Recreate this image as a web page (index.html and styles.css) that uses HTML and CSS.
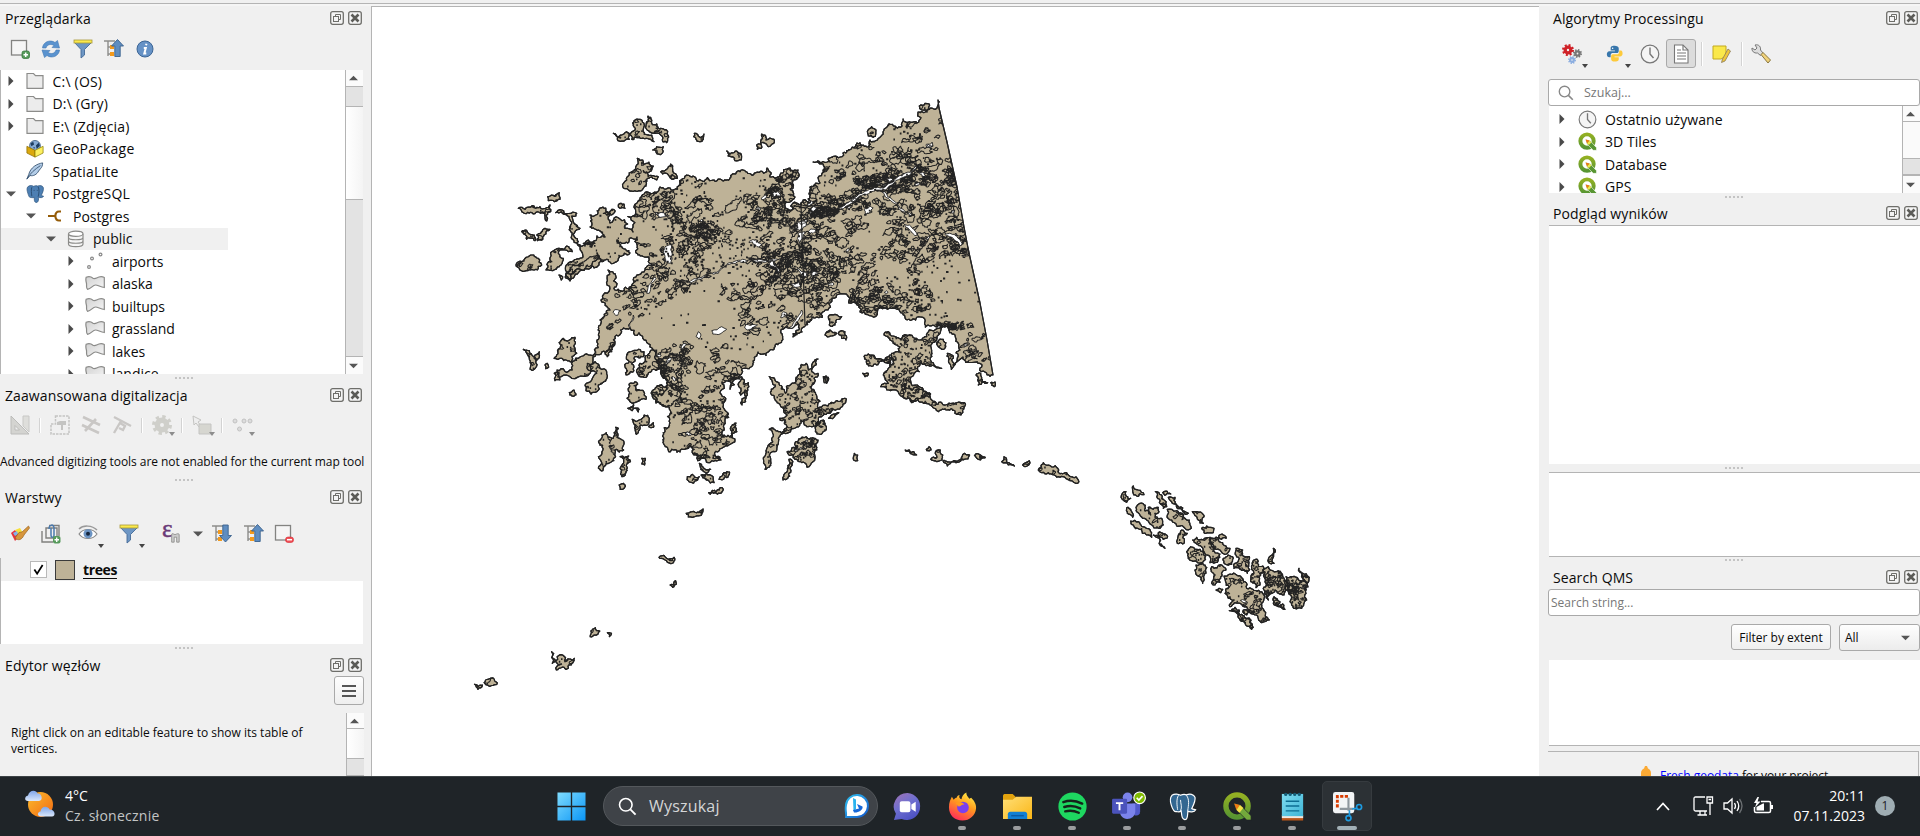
FILE: index.html
```html
<!DOCTYPE html>
<html lang="pl">
<head>
<meta charset="utf-8">
<title>QGIS</title>
<link rel="stylesheet" href="styles.css">
</head>
<body>
<svg class="defs" width="0" height="0">
  <defs>
    <linearGradient id="gPoly" x1="0" y1="0" x2="1" y2="1"><stop offset="0" stop-color="#d2d2d2"/><stop offset="1" stop-color="#f6f6f6"/></linearGradient>
    <linearGradient id="gWin" x1="0" y1="0" x2="1" y2="1"><stop offset="0" stop-color="#7fdcff"/><stop offset="1" stop-color="#0a95f5"/></linearGradient>
    <linearGradient id="gSun" x1="0" y1="0" x2="1" y2="1"><stop offset="0" stop-color="#fbbc2e"/><stop offset="1" stop-color="#f26a12"/></linearGradient>
    <linearGradient id="gCloud" x1="0" y1="0" x2="0" y2="1"><stop offset="0" stop-color="#7fa5e8"/><stop offset="1" stop-color="#dbe8fb"/></linearGradient>
    <linearGradient id="gChat" x1="0" y1="0" x2=".6" y2="1"><stop offset="0" stop-color="#a173b4"/><stop offset=".5" stop-color="#6f6fd0"/><stop offset="1" stop-color="#4d52c4"/></linearGradient>
    <linearGradient id="gFox" x1=".8" y1="0" x2=".3" y2="1"><stop offset="0" stop-color="#fff24a"/><stop offset=".45" stop-color="#ff9a1e"/><stop offset="1" stop-color="#ff2c5a"/></linearGradient>
    <linearGradient id="gFold" x1="0" y1="0" x2="1" y2="1"><stop offset="0" stop-color="#ffdf77"/><stop offset="1" stop-color="#fbb616"/></linearGradient>
    <linearGradient id="gQ" x1="0" y1="0" x2="0" y2="1"><stop offset="0" stop-color="#93b023"/><stop offset="1" stop-color="#589632"/></linearGradient>
    <linearGradient id="gNote" x1="0" y1="0" x2="1" y2="1"><stop offset="0" stop-color="#7fdcf0"/><stop offset="1" stop-color="#3fb5d6"/></linearGradient>
    <linearGradient id="gBing" x1="0" y1="0" x2="1" y2="1"><stop offset="0" stop-color="#2fc4f2"/><stop offset="1" stop-color="#1354c8"/></linearGradient>
    <symbol id="float" viewBox="0 0 14 14"><rect x=".7" y=".7" width="12.6" height="12.6" rx="2" fill="#f4f4f4" stroke="#6e6e6a" stroke-width="1.3"/><rect x="3.5" y="5.5" width="5" height="5" fill="none" stroke="#6e6e6a"/><path d="M5.5 5V3.5H10.5V8.5H9" fill="none" stroke="#6e6e6a"/></symbol>
    <symbol id="close" viewBox="0 0 14 14"><rect x=".7" y=".7" width="12.6" height="12.6" rx="2" fill="#f4f4f4" stroke="#6e6e6a" stroke-width="1.3"/><path d="M3.500 3.500L10.500 10.500M10.500 3.500L3.500 10.500" stroke="#5c5c58" stroke-width="2.600"/></symbol>
    <symbol id="right" viewBox="0 0 6 10"><path d="M.5 0L5.5 5L.5 10Z" fill="#4a4a4a"/></symbol>
    <symbol id="down" viewBox="0 0 10 6"><path d="M0 .5H10L5 5.5Z" fill="#555"/></symbol>
    <symbol id="up" viewBox="0 0 10 6"><path d="M0 5.5H10L5 .5Z" fill="#555"/></symbol>
    <symbol id="folder" viewBox="0 0 18 18"><path d="M1 1.5H7.5L9.5 3.7H17V16.3H1Z" fill="#ececec" stroke="#8c8c8a" stroke-width="1.2"/></symbol>
    <symbol id="poly" viewBox="0 0 20 16"><path d="M1.200 1.200C3.500 .3 6 .5 8 2.200C9.500 3.400 12 1.600 14 1C16 .5 18 .8 19.300 1.500V11.500C15.500 11.200 13 9 10.500 9C7.500 9 6.500 12.800 2.500 13.300C.8 12 2 9.500 1.400 7C.8 5 .6 3 1.200 1.200Z" fill="url(#gPoly)" stroke="#8b8b89" stroke-width="1.200"/></symbol>
    <symbol id="points" viewBox="0 0 20 18"><g fill="#fff" stroke="#888" stroke-width="1.2"><circle cx="4" cy="15" r="1.400"/><circle cx="7" cy="6.500" r="1.400"/><circle cx="15.500" cy="2.500" r="1.400"/></g></symbol>
    <symbol id="dbase" viewBox="0 0 18 18"><path d="M1.500 4V14C1.500 17.500 16 17.500 16 14V4M1.500 7.500C1.500 10.500 16 10.500 16 7.500M1.500 11C1.500 14 16 14 16 11" fill="#f5f5f5" stroke="#8a8a88" stroke-width="1.200"/><ellipse cx="8.750" cy="3.800" rx="7.250" ry="2.600" fill="#fff" stroke="#8a8a88" stroke-width="1.200"/></symbol>
    <symbol id="conn" viewBox="0 0 14 12"><path d="M0 6H7M13 1.500H11C8.500 1.500 7.500 3.500 7.300 6C7.500 8.500 8.500 10.500 11 10.500H13" fill="none" stroke="#955c08" stroke-width="2.200"/></symbol>
    <symbol id="gpkg" viewBox="0 0 20 20"><circle cx="10" cy="6.500" r="6" fill="#87abd4" stroke="#294a70" stroke-width=".8"/><path d="M5 4L8 2L9 5L6 7ZM11 6L14 3L15.500 6L12 10ZM8 8L10 8L9 10Z" fill="#1d3c60"/><path d="M1 7L10 11.500V19L1 14.500Z" fill="#dba80d" stroke="#8a6b00" stroke-width=".8"/><path d="M19 7L10 11.500V19L19 14.500Z" fill="#fdf060" stroke="#8a7b00" stroke-width=".8"/></symbol>
    <symbol id="feather" viewBox="0 0 20 20"><path d="M18.500 1C12 2 5 6 3 14L1 19L4.500 15C8 16 12 14 14 10L16 7.500C17.500 6 18.500 4 18.500 1Z" fill="#b3cde8" stroke="#3a5674" stroke-width="1"/><path d="M1 19C4 13 10 8 16 4" stroke="#3a5674" fill="none"/></symbol>
    <symbol id="elephant" viewBox="0 0 20 20"><path d="M2 2C4 0 7 .5 8.500 1.500C10.500 .5 12 .7 13 1.200C15.500 0 18.500 .6 19.300 3C19.800 6 18 9.500 17 11.500C18 12.500 19 12 19.500 12.500C18.500 14.500 15.500 14.300 14 13.500C14 16 14 18 12.500 19.200C11 20 9.500 19 9.300 17L9 13.500C7.500 14.500 6 14 5.500 13.800C4 14.500 3 12.500 2 9C1 6 .7 3.500 2 2Z" fill="#4d7fb3" stroke="#31567f" stroke-width=".8"/><path d="M6.500 2.500C5.500 5 6 9 6.500 12.500M13.500 2C15 5 14.500 9 13.500 13M8.500 6H9.500M12 6H13" stroke="#27496e" fill="none"/></symbol>
    <symbol id="qlogo" viewBox="0 0 20 20"><circle cx="9.500" cy="9.500" r="7" fill="#fff" stroke="url(#gQ)" stroke-width="4.200"/><path d="M8 8L12.500 9L19.500 16.500V19.300H16L9.500 12.500Z" fill="#589632" stroke="#fff" stroke-width=".6"/><path d="M8 8L12.200 9L9.500 12Z" fill="#ee7913"/><path d="M12.200 9L14 11L11.500 13.800L9.500 12Z" fill="#f0e64a"/></symbol>
    <symbol id="clock" viewBox="0 0 20 20"><circle cx="10" cy="10" r="8.800" fill="#f5f5f5" stroke="#777" stroke-width="1.200"/><path d="M10 3.500V10L13.500 14" fill="none" stroke="#777" stroke-width="1.400"/></symbol>
    <symbol id="funnel" viewBox="0 0 20 20"><path d="M1.500 3.500L8 10.500V19L11.500 16V10.500L18.500 3.500Z" fill="#6d96c4" stroke="#446a97" stroke-width=".9"/><rect x="1" y="1" width="18" height="3" fill="#fbe94c" stroke="#a8983a" stroke-width=".8"/></symbol>
    <symbol id="treeup" viewBox="0 0 20 20"><path d="M0 2H11M4 2V17M4 8H7M4 15H7" stroke="#8d8d8b" stroke-width="1.400" fill="none"/><rect x="6" y="6" width="4" height="4" fill="#f39a1d"/><rect x="6" y="13" width="4" height="4" fill="#f39a1d"/><path d="M13.500 .5L19.500 7H16.200V17.500H10.800V7H7.500Z" fill="#5f8dc0" stroke="#3a618c" stroke-width=".9"/></symbol>
    <symbol id="treedown" viewBox="0 0 20 20"><path d="M0 2H11M4 2V17M4 8H7M4 15H7" stroke="#8d8d8b" stroke-width="1.400" fill="none"/><rect x="6" y="6" width="4" height="4" fill="#f39a1d"/><rect x="6" y="13" width="4" height="4" fill="#f39a1d"/><path d="M13.500 18L19.500 11.500H16.200V1H10.800V11.500H7.500Z" fill="#5f8dc0" stroke="#3a618c" stroke-width=".9"/></symbol>
    <symbol id="gear" viewBox="0 0 20 20"><circle cx="10" cy="10" r="8" fill="none" stroke="currentColor" stroke-width="4" stroke-dasharray="3.200 3.080"/><circle cx="10" cy="10" r="4.700" fill="none" stroke="currentColor" stroke-width="5.400"/></symbol>
    <symbol id="glass" viewBox="0 0 20 20"><circle cx="8.200" cy="8.200" r="6.600" fill="none" stroke="currentColor" stroke-width="1.700"/><path d="M13 13L18.500 18.500" stroke="currentColor" stroke-width="2"/></symbol>
  </defs>
</svg>

<div class="desktop">
  <div class="topline"></div>
  <div class="workspace">
    <aside class="dock left">
      <header class="title"><span>Przeglądarka</span><svg><use href="#float"/></svg><svg><use href="#close"/></svg></header>
      <div class="tools browse">
        <svg viewBox="0 0 20 20"><rect x="1.500" y="1.500" width="15" height="14.500" fill="#f5f5f5" stroke="#838381" stroke-width="1.300"/><rect x="12" y="12" width="7.500" height="7.500" rx="2" fill="#579a5c" stroke="#2f7234" stroke-width=".7"/><path d="M15.700 13.500V18M13.500 15.700H18" stroke="#fff" stroke-width="1.500"/></svg>
        <svg viewBox="0 0 20 20"><path d="M1.500 9C2 3 9 0 14 3.500L16.500 1.500L18.500 9L11 8.500L13 6.500C9.500 4.500 6 5.500 5 9Z" fill="#5a93cf" stroke="#4379b4" stroke-width=".6"/><path d="M18.500 11C18 17 11 20 6 16.500L3.500 18.500L1 11L9 11.500L7 13.500C10.500 15.500 14 14.500 15 11Z" fill="#5a93cf" stroke="#4379b4" stroke-width=".6"/></svg>
        <svg><use href="#funnel"/></svg>
        <svg><use href="#treeup"/></svg>
        <svg viewBox="0 0 20 20"><circle cx="10" cy="10" r="8" fill="#6692c6" stroke="#3c6595" stroke-width="1"/><path d="M11.500 4.800L11 6.300M8.800 9H10.800L9.300 14.500H11.300" stroke="#fff" stroke-width="2" fill="none"/></svg>
      </div>
      <div class="pane tree">
        <div class="rows">
          <div class="row l0"><svg class="r"><use href="#right"/></svg><svg class="i"><use href="#folder"/></svg><span>C:\ (OS)</span></div>
          <div class="row l0"><svg class="r"><use href="#right"/></svg><svg class="i"><use href="#folder"/></svg><span>D:\ (Gry)</span></div>
          <div class="row l0"><svg class="r"><use href="#right"/></svg><svg class="i"><use href="#folder"/></svg><span>E:\ (Zdjęcia)</span></div>
          <div class="row l0"><svg class="r"></svg><svg class="i"><use href="#gpkg"/></svg><span>GeoPackage</span></div>
          <div class="row l0"><svg class="r"></svg><svg class="i"><use href="#feather"/></svg><span>SpatiaLite</span></div>
          <div class="row l0"><svg class="d"><use href="#down"/></svg><svg class="i"><use href="#elephant"/></svg><span>PostgreSQL</span></div>
          <div class="row l1"><svg class="d"><use href="#down"/></svg><svg class="i thin"><use href="#conn"/></svg><span>Postgres</span></div>
          <div class="row l2"><svg class="d"><use href="#down"/></svg><svg class="i small"><use href="#dbase"/></svg><span>public</span></div>
          <div class="row l3"><svg class="r"><use href="#right"/></svg><svg class="i"><use href="#points"/></svg><span>airports</span></div>
          <div class="row l3"><svg class="r"><use href="#right"/></svg><svg class="i"><use href="#poly"/></svg><span>alaska</span></div>
          <div class="row l3"><svg class="r"><use href="#right"/></svg><svg class="i"><use href="#poly"/></svg><span>builtups</span></div>
          <div class="row l3"><svg class="r"><use href="#right"/></svg><svg class="i"><use href="#poly"/></svg><span>grassland</span></div>
          <div class="row l3"><svg class="r"><use href="#right"/></svg><svg class="i"><use href="#poly"/></svg><span>lakes</span></div>
          <div class="row l3"><svg class="r"><use href="#right"/></svg><svg class="i"><use href="#poly"/></svg><span>landice</span></div>
        </div>
        <div class="bar"><div class="btn"><svg><use href="#up"/></svg></div><div class="stub"></div><div class="thumb"></div><div class="trough"></div><div class="btn end"><svg><use href="#down"/></svg></div></div>
      </div>
      <div class="split"></div>
      <header class="title"><span class="t2">Zaawansowana digitalizacja</span><svg><use href="#float"/></svg><svg><use href="#close"/></svg></header>
      <div class="tools digit">
        <svg viewBox="0 0 20 20"><path d="M1 1L19 19H1ZM5 10.500V15H9.500Z" fill="#d4d4d1" stroke="#bcbcba" fill-rule="evenodd"/><path d="M13 1H19V17L13 11Z" fill="#dededb" stroke="#c8c8c6"/></svg>
        <i></i>
        <svg viewBox="0 0 20 20"><path d="M5.500 1H19V19H1V9H5.500Z" fill="none" stroke="#c4c4c2" stroke-width="1.500" stroke-dasharray="2.500 1"/><path d="M7 7L10 6H16V10H13V15H11V10H7Z" fill="#c4c4c2"/></svg>
        <svg class="m2" viewBox="0 0 20 20"><path d="M2 2L19 10M1 10L18 18M15 4L4 16" stroke="#c9c7c5" stroke-width="2.600"/></svg>
        <svg class="m3" viewBox="0 0 20 20"><path d="M2 2L19 11M9 6L2 18M8 8L13 11L11 15L7 13" fill="none" stroke="#c9c7c5" stroke-width="2.400"/></svg>
        <i></i>
        <span class="drop"><svg class="pale"><use href="#gear"/></svg><b></b></span>
        <i></i>
        <span class="drop"><svg viewBox="0 0 20 20"><path d="M1 1L9 5L6 7L9 11L7 12L4 8L2 10Z" fill="#eee" stroke="#c4c4c2"/><path d="M7 9H19V19H7Z" fill="#d6d6d0" stroke="#c4c4c2"/></svg><b></b></span>
        <i></i>
        <span class="drop"><svg viewBox="0 0 20 20"><g fill="#dcdcdc" stroke="#c2c2c2"><circle cx="3" cy="6" r="2"/><circle cx="12" cy="6" r="2"/><circle cx="18" cy="6" r="2"/><circle cx="7.500" cy="14" r="2"/></g></svg><b></b></span>
      </div>
      <p class="message">Advanced digitizing tools are not enabled for the current map tool</p>
      <div class="split"></div>
      <header class="title"><span>Warstwy</span><svg><use href="#float"/></svg><svg><use href="#close"/></svg></header>
      <div class="tools layers">
        <svg viewBox="0 0 20 20"><path d="M1 9L5 6L10 12L5 17Z" fill="#e8323c"/><path d="M5 6L10 4L13 9L9 12Z" fill="#f7e13a"/><path d="M3 9L7 7L8 10L5 12Z" fill="#83b2ea"/><path d="M18.500 2L12 8L9 8.500L5 14C8 17 12 16 14 11L19.500 4Z" fill="#d7963c" stroke="#9b6422" stroke-width=".7"/></svg>
        <svg viewBox="0 0 20 20"><path d="M1 7V18H12M5 4V14H16V4ZM8 1.500H18V12" fill="none" stroke="#80807e" stroke-width="1.400"/><path d="M8 5C8 0 13 0 13 4V11C13 14 10 14 10 11V4" fill="none" stroke="#4a79ad" stroke-width="1.500"/><rect x="12" y="12" width="7.500" height="7.500" rx="2" fill="#579a5c"/><path d="M15.700 13.500V18M13.500 15.700H18" stroke="#fff" stroke-width="1.400"/></svg>
        <span class="drop eye"><svg viewBox="0 0 20 20"><path d="M1 5C5 1 14 1 19 6" fill="none" stroke="#999" stroke-width="1.500"/><path d="M1 10C5 4 15 4 19 10C15 16 5 16 1 10Z" fill="#fff" stroke="#888" stroke-width="1.100"/><circle cx="10" cy="9.800" r="4.500" fill="#6b93c2"/><circle cx="10" cy="9.800" r="2" fill="#16263c"/></svg><b></b></span>
        <span class="drop fil"><svg><use href="#funnel"/></svg><b></b></span>
        <span class="eps"><em>ε</em><svg viewBox="0 0 12 12"><path d="M2 11V2C2 0 4 1 6 2C8 1 11 0 11 2V11H8V5H5V11Z" fill="#ccc" stroke="#8a8a88"/></svg></span>
        <svg class="caret"><use href="#down"/></svg>
        <svg class="td"><use href="#treedown"/></svg>
        <svg class="tu"><use href="#treeup"/></svg>
        <svg viewBox="0 0 20 20"><rect x="1.500" y="1.500" width="15" height="14.500" fill="#f5f5f5" stroke="#838381" stroke-width="1.300"/><rect x="11.500" y="13" width="8" height="5.500" rx="2.500" fill="#f04e55" stroke="#d32e35" stroke-width=".6"/><path d="M13 15.700H18" stroke="#fff" stroke-width="1.500"/></svg>
      </div>
      <div class="pane layerlist"><div class="layer"><span class="check"><svg viewBox="0 0 12 12"><path d="M1.500 6L4.500 10.500L10.500 1" fill="none" stroke="#000" stroke-width="1.900"/></svg></span><span class="swatch"></span><strong>trees</strong></div></div>
      <div class="split"></div>
      <header class="title vertex"><span>Edytor węzłów</span><svg><use href="#float"/></svg><svg><use href="#close"/></svg></header>
      <div class="menurow"><button class="menu"><s></s><s></s><s></s></button></div>
      <div class="vertexbody"><p>Right click on an editable feature to show its table of<br>vertices.</p><div class="bar"><div class="btn"><svg><use href="#up"/></svg></div><div class="thumb"></div><div class="stub"></div></div></div>
    </aside>

    <main class="map"><svg id="map" viewBox="373 7 1166 769" width="1166" height="769"></svg></main>

    <aside class="dock right">
      <header class="title"><span>Algorytmy Processingu</span><svg><use href="#float"/></svg><svg><use href="#close"/></svg></header>
      <div class="tools proc">
        <span class="drop g"><svg class="red"><use href="#gear"/></svg><svg class="gray"><use href="#gear"/></svg><svg class="blue"><use href="#gear"/></svg><b></b></span>
        <span class="drop py"><svg viewBox="0 0 20 20"><path d="M10 1C6 1 5.500 2.500 5.500 4V6.500H10.500V7.300H4C2 7.300 1 9 1 11C1 13.500 2 14.500 4 14.500H5.500V12C5.500 10 7 9.500 8 9.500H13C14 9.500 15 8.500 15 7V4C15 2 13 1 10 1Z" fill="#3776ab"/><path d="M10.500 19.500C14.500 19.500 15 18 15 16.500V14.500H10V13.500H16.500C18.500 13.500 19.500 12 19.500 10C19.500 7 18.500 6.500 16.500 6.500H15.500V8.500C15.500 10 14 11 13 11H8C7 11 6 12 6 13.500V16.500C6 18.500 7.500 19.500 10.500 19.500Z" fill="#fdca3b"/><circle cx="7.800" cy="3.800" r=".9" fill="#fff"/></svg><b></b></span>
        <svg class="ck"><use href="#clock"/></svg>
        <span class="pressed"><svg viewBox="0 0 20 20"><path d="M3.500 1H12L17 6V19H3.500Z" fill="#fff" stroke="#777" stroke-width="1.100"/><path d="M12 1V6H17M6 6H10M6 9H15M6 12H15M6 15H15" fill="none" stroke="#777" stroke-width="1.200"/></svg></span>
        <i></i>
        <svg class="nt" viewBox="0 0 20 20"><path d="M2 2H15V12L10 15H2Z" fill="#fae84a" stroke="#c2a91f"/><path d="M17 5L19.500 7L14 17L10.500 18.500L11.500 15Z" fill="#f0c63a" stroke="#8a7b5a" stroke-width=".8"/></svg>
        <i></i>
        <svg class="wr" viewBox="0 0 20 20"><path d="M1 4L4 6L6 4L4 1C8 0 10 3 9.500 6L12 9L9.500 11.500L6.500 9C3 9.500 .5 7 1 4Z" fill="#ddd" stroke="#777"/><path d="M10 10.500L12 8.500L19.500 16L17 19Z" fill="#f0d27a" stroke="#8a7740"/></svg>
      </div>
      <div class="search"><svg><use href="#glass"/></svg><span>Szukaj...</span></div>
      <div class="pane algs">
        <div class="rows">
          <div class="row"><svg class="r"><use href="#right"/></svg><svg class="i"><use href="#clock"/></svg><span>Ostatnio używane</span></div>
          <div class="row"><svg class="r"><use href="#right"/></svg><svg class="i"><use href="#qlogo"/></svg><span>3D Tiles</span></div>
          <div class="row"><svg class="r"><use href="#right"/></svg><svg class="i"><use href="#qlogo"/></svg><span>Database</span></div>
          <div class="row"><svg class="r"><use href="#right"/></svg><svg class="i"><use href="#qlogo"/></svg><span>GPS</span></div>
        </div>
        <div class="bar"><div class="btn"><svg><use href="#up"/></svg></div><div class="trough lite"></div><div class="stub"></div><div class="btn end"><svg><use href="#down"/></svg></div></div>
      </div>
      <div class="split"></div>
      <header class="title res"><span>Podgląd wyników</span><svg><use href="#float"/></svg><svg><use href="#close"/></svg></header>
      <div class="blank b1"></div>
      <div class="split tight"></div>
      <div class="blank b2"></div>
      <div class="split low"></div>
      <header class="title qms"><span>Search QMS</span><svg><use href="#float"/></svg><svg><use href="#close"/></svg></header>
      <div class="search plain"><span>Search string...</span></div>
      <div class="filters"><button class="pushbtn">Filter by extent</button><button class="combo"><span>All</span><svg><use href="#down"/></svg></button></div>
      <div class="blank b3"></div>
      <div class="promo"><svg viewBox="0 0 10 20"><path d="M4 0H6L7 2.500C9 3.500 10 5 10 7V20H0V7C0 5 1 3.500 3 2.500Z" fill="#fbaa35"/></svg><span><a>Fresh geodata</a> for your project</span></div>
    </aside>
  </div>

  <footer class="taskbar">
    <div class="weather"><svg viewBox="0 0 30 28"><circle cx="15.500" cy="14.500" r="12.500" fill="url(#gSun)"/><path d="M3 11C-1 11 -.5 6 3 5.500C4 0 11 -1 12.500 3.500C17 3 18.500 10.500 14 11Z" fill="url(#gCloud)"/><path d="M16 26.500C12 26.500 12 22 15.500 21.500C16 15.500 23 15.500 24.500 19.500C30.500 19.500 31 26.500 27 26.500Z" fill="url(#gCloud)"/></svg><div><span>4°C</span><small>Cz. słonecznie</small></div></div>
    <div class="apps">
      <div class="app start"><svg viewBox="0 0 30 30"><path d="M.5 .5H14.300V14.300H.5ZM15.700 .5H29.500V14.300H15.700ZM.5 15.700H14.300V29.500H.5ZM15.700 15.700H29.500V29.500H15.700Z" fill="url(#gWin)"/></svg></div>
      <div class="pill"><svg><use href="#glass"/></svg><span>Wyszukaj</span><svg class="bing" viewBox="0 0 26 26"><path d="M1 25C2 22 0 18 1 12A12 12 0 1 1 13 25Z" fill="url(#gBing)"/><path d="M3 23C3.500 19 2 17 3 12A10 10 0 1 1 13 23Z" fill="#fff"/><path d="M9 5L12 6.500V16L9.500 18Z" fill="#2bb4ee"/><path d="M13 11L18.500 13.500C19.500 17 14 20 10 19.500L9 17L15 15.500Z" fill="#1768d8"/></svg></div>
      <div class="app"><svg viewBox="0 0 30 30"><path d="M15 1A14 14 0 1 1 9 28L1 29L3 22.500A14 14 0 0 1 15 1Z" fill="url(#gChat)"/><rect x="7" y="9.500" width="11" height="11.500" rx="2" fill="#fff"/><path d="M19 13L23.500 10V20.500L19 17.500Z" fill="#fff"/></svg></div>
      <div class="app run"><svg viewBox="0 0 30 30"><path d="M4 5L6 8C7 6.500 8 6 9 6C9 4 11 3 12 3C11 5 12 7 14 7.500C14 5 16 2 19 .5C19 4 21 5 22 7L24 6C27 9 29.500 13 29 17C28.500 24 22.500 29.500 15 29.500C7 29.500 1 24 1 16C1 11 2.500 8 4 5Z" fill="url(#gFox)"/><circle cx="15.500" cy="16" r="6" fill="#7a3ff0"/><path d="M8 12C10 9.500 15 10 17 13C14 12.500 13.500 15 11 15Z" fill="#ff9a1e"/></svg></div>
      <div class="app run"><svg viewBox="0 0 30 30"><path d="M0 4C0 2.500 1 2 2 2H10L13 5V10H0Z" fill="#e2a30e"/><path d="M0 8H10L13.500 5H30V28H0Z" fill="url(#gFold)"/><path d="M5 28V23C5 21.500 6 20.500 7.500 20.500H22.500C24 20.500 25 21.500 25 23V28Z" fill="#117fd4"/><path d="M8.500 24.500H21.500" stroke="#0b5aa5" stroke-width="1.500"/></svg></div>
      <div class="app run"><svg viewBox="0 0 30 30"><circle cx="15" cy="15" r="14.600" fill="#1ed760"/><path d="M5.500 10.500C11 8.500 19 9 25 12M6.500 15.500C12 13.800 18 14.500 23 17M7.500 20C12 18.800 17 19.300 21.500 21.500" fill="none" stroke="#15231a" stroke-width="2.500" stroke-linecap="round"/></svg></div>
      <div class="app run"><svg class="teams" viewBox="0 0 36 30"><circle cx="17" cy="5.500" r="5" fill="#7b83eb"/><path d="M22 12H30V20C30 24 27 25 24 24Z" fill="#5059c9"/><path d="M9 12H25V20C25 25 21 28 16.500 28C12 28 9 24 9 20Z" fill="#7b83eb"/><rect x="1" y="7" width="15.500" height="15.500" rx="1.200" fill="#4b53bc"/><path d="M5 11.500H12.500M8.700 11.500V19" stroke="#fff" stroke-width="2"/><circle cx="29.500" cy="6" r="6" fill="#7fba00" stroke="#fff" stroke-width="1.200"/><path d="M26.500 6L28.700 8.300L32.500 4.300" fill="none" stroke="#fff" stroke-width="1.700"/></svg></div>
      <div class="app run"><svg viewBox="-1 -1 22 22"><path d="M2 1.500C4 0 7 .5 8.500 1.500C10.500 .5 12 .7 13 1.200C15.500 0 18.500 .6 19.500 3C20 6 18 9.500 17 11.500C18 12.500 19 12 20 12.500C19 14.500 15.500 14.300 14 13.500C14 16 14 18 13 19.500C11.500 20.500 9.800 19.500 9.500 17L9 13.500C7.500 14.500 6 14 5.500 13.800C4 14.500 2.500 12.500 1.500 9C.5 6 .3 3.500 2 1.500Z" fill="#336791" stroke="#fff" stroke-width=".9"/><path d="M7 1.500C5 4.500 6 10 6.300 12.500M13 1.500C15.500 5 14.500 9 14 13M8.500 5C8.500 8 10 10 8.500 13.500" fill="none" stroke="#fff" stroke-width=".7"/></svg></div>
      <div class="app run"><svg viewBox="0 0 30 30"><circle cx="14.500" cy="14.500" r="11.500" fill="none" stroke="url(#gQ)" stroke-width="5.500"/><path d="M11.500 12L18 13.500L29 24.500V29H24.500L14 18.500Z" fill="#73a83c" stroke="#1f2428" stroke-width=".7"/><path d="M11.500 12L17.500 13.500L14 18.500Z" fill="#ee7913"/><path d="M17.500 13.500L21 16.500L17 21.500L14 18.500Z" fill="#f4e04a"/></svg></div>
      <div class="app run"><svg viewBox="0 0 30 30"><rect x="4" y="25" width="22" height="4.500" fill="#b8551a"/><rect x="4" y="24" width="22" height="3" fill="#f3e8df"/><rect x="4" y="2" width="22" height="23" fill="url(#gNote)"/><g fill="#155e78"><circle cx="8" cy="2.500" r="1.700"/><circle cx="12.600" cy="2.500" r="1.700"/><circle cx="17.300" cy="2.500" r="1.700"/><circle cx="22" cy="2.500" r="1.700"/></g><path d="M8 9.500H22M8 14.500H22M8 19.500H22" stroke="#0d6e92" stroke-width="1.500"/></svg></div>
      <div class="app run active"><svg viewBox="0 0 30 30"><rect x="0" y="0" width="22" height="22" rx="2.500" fill="#f2f4f5"/><path d="M4.500 16V4.500H17" fill="none" stroke="#d83b01" stroke-width="3" stroke-dasharray="3.300 1.500"/><path d="M16 6V19.500M7 17.500H21" stroke="#8e979d" stroke-width="2.200"/><circle cx="16" cy="27" r="2.600" fill="none" stroke="#1e9be0" stroke-width="1.700"/><circle cx="27" cy="15.500" r="2.600" fill="none" stroke="#1e9be0" stroke-width="1.700"/><path d="M17 19V24.500M20 17.500L25 17" stroke="#1e9be0" stroke-width="1.700"/></svg></div>
    </div>
    <div class="tray">
      <svg class="chev" viewBox="0 0 14 9"><path d="M1 8L7 1.500L13 8" fill="none" stroke="#fff" stroke-width="1.700"/></svg>
      <svg class="net" viewBox="0 0 20 20"><path d="M12 1H2.500Q1 1 1 2.500V13.500Q1 15 2.500 15H14M7 15V18.500M12 15V18.500M4.500 19H14M14 1H19.500V7H14ZM17 7V19M15.500 3.500H18" fill="none" stroke="#fff" stroke-width="1.300"/></svg>
      <svg class="vol" viewBox="0 0 20 18"><path d="M1 6H4.500L9 2V16L4.500 12H1Z" fill="none" stroke="#fff" stroke-width="1.300"/><path d="M11.500 6Q13.500 9 11.500 12M14 4Q17.500 9 14 14" fill="none" stroke="#fff" stroke-width="1.300"/><path d="M16.500 2Q21.500 9 16.500 16" fill="none" stroke="#6b6f72" stroke-width="1.300"/></svg>
      <svg class="bat" viewBox="0 0 20 18"><path d="M8 4.500H16Q17.500 4.500 17.500 6V14Q17.500 15.500 16 15.500H3Q1.500 15.500 1.500 14V10" fill="none" stroke="#fff" stroke-width="1.500"/><path d="M3.500 10L10 6.500H11V13.500H3.500Z" fill="#fff"/><path d="M18 8H20V12H18Z" fill="#fff"/><path d="M4.500 0L1 6H3.500L2 10.500L7.500 4.500H4.500L6 0Z" fill="#fff"/></svg>
      <div class="time"><span>20:11</span><span>07.11.2023</span></div>
      <div class="badge">1</div>
    </div>
  </footer>
</div>
<script src="map.js"></script>
</body>
</html>
```

FILE: styles.css
```css
* { box-sizing: border-box; }
body { margin: 0; background: #f0f0f0; font-family: "Open Sans", "Noto Sans", sans-serif; font-size: 14px; color: #0a0a0a; overflow: hidden; }
p { margin: 0; }
svg { display: block; flex: none; overflow: visible; }
button { font: inherit; color: inherit; padding: 0; }
.defs { position: absolute; }
.desktop { width: 1920px; height: 836px; display: flex; flex-direction: column; overflow: hidden; }
.topline { height: 6px; flex: none; border-top: 3px solid #f0f0f0; background: linear-gradient(#b4b4b4 1px, #f5f5f5 1px); }
.workspace { height: 770px; flex: none; display: flex; }
.dock { display: flex; flex-direction: column; background: #f0f0f0; overflow: hidden; height: 770px; }
.dock > * { flex: none; }
.left { width: 371px; }
.right { width: 381px; padding-left: 9px; }
.map { width: 1168px; flex: none; background: #fff; border-top: 1px solid #b4b4b4; border-left: 1px solid #b4b4b4; padding-left: 1px; overflow: hidden; }

.title { height: 28px; display: flex; align-items: center; padding-left: 5px; letter-spacing: 0.1px; }
.title span { flex: 1; white-space: nowrap; line-height: 20px; }
.title svg { width: 14px; height: 14px; margin-right: 4px; margin-top: -2px; }
.left .title svg:last-child { margin-right: 9.5px; }
.right .title svg:last-child { margin-right: 2px; }
.dock > .title:first-child { height: 26px; }

.tools { display: flex; align-items: center; }
.tools > svg, .drop svg { width: 20px; height: 20px; }
.tools > i { width: 2px; height: 15px; background: #d3d3d3; border-right: 1px solid #fff; }
.drop { position: relative; display: block; width: 20px; height: 20px; }
.drop b { position: absolute; right: -3px; bottom: -1px; border: 3px solid transparent; border-top: 4px solid #8d8d8d; border-bottom: 0; }
.browse { height: 38px; padding: 0 0 4px 10px; gap: 11.3px; }
.digit { height: 30px; padding-left: 10px; gap: 9px; }
.digit .m2, .digit .m3 { margin-left: 2px; }
.pale { color: #cfcfca; }
.layers { height: 46px; padding: 0 0 3px 10px; }
.layers > svg:nth-child(2) { margin-left: 11px; }
.layers .eye { margin-left: 17px; }
.layers .fil { margin-left: 21px; }
.layers .drop b, .proc .drop b { border-top-color: #444; right: -6px; bottom: -4px; }
.eps { position: relative; width: 20px; height: 20px; margin-left: 22px; }
.eps em { position: absolute; left: 1px; top: -5px; font: 500 25px/20px "Liberation Serif", serif; color: #6a3a78; -webkit-text-stroke: 0.5px #6a3a78; }
.eps svg { position: absolute; left: 9px; top: 9px; width: 10px; height: 10px; }
.layers > .caret { width: 10px; height: 6px; margin-left: 12px; }
.layers .td { margin-left: 9px; }
.layers .tu { margin-left: 12px; }
.layers .tu + svg { margin-left: 10px; }

.pane { display: flex; background: #fff; overflow: hidden; }
.left .pane { border-left: 1px solid #b4b4b4; width: 363px; }
.tree { height: 304px; }
.rows { flex: 1; }
.row { height: 22.500px; display: flex; align-items: center; white-space: nowrap; }
.row .r { width: 6px; height: 10px; margin: 0 2px; }
.row .d { width: 10px; height: 6px; }
.row .i { width: 20px; height: 18px; }
.row .small { width: 18px; margin-right: 2px; }
.row .thin { width: 14px; height: 12px; margin-right: 6px; }
.l0 { padding-left: 5px; letter-spacing: 0.2px; }
.l0 .i { margin: 0 7.5px 0 9px; }
.row.l1 { padding-left: 25px; }
.l1 .i { margin-left: 12px; margin-right: 11px !important; }
.row.l2 { padding-left: 45px; width: 227px; background: #f0f0f0; }
.l2 .i { margin-left: 11px; margin-right: 8px !important; }
.row.l3 { padding-left: 65px; }
.l3 .i { margin: 0 7px 0 9px; }
.bar { width: 18px; display: flex; flex-direction: column; border-left: 1px solid #b4b4b4; }
.btn { height: 17px; display: flex; align-items: center; justify-content: center; background: #fbfbfb; border-bottom: 1px solid #b4b4b4; flex: none; }
.btn.end { height: 18px; border-bottom: 0; border-top: 1px solid #b4b4b4; }
.btn svg { width: 9px; height: 6px; margin-right: 2px; }
.stub { height: 20px; background: #e3e3e3; border-bottom: 1px solid #b4b4b4; }
.thumb { height: 93px; background: linear-gradient(90deg, #fff, #f4f4f4); border-bottom: 1px solid #b4b4b4; }
.trough { flex: 1; background: #e3e3e3; }
.trough.lite { background: #fafafa; }

.split { height: 8px; display: flex; background: radial-gradient(circle, #c4c4c4 0.8px, transparent 1px) 0 0 / 4px 8px repeat-x content-box; padding: 0 174px; }
.left .split { padding-right: 176px; }
.right .split { padding: 0 176px; }
.right .split.low { height: 7px; background-size: 4px 6px; }
.message { height: 36px; padding-top: 12px; font-size: 12px; line-height: 20px; white-space: nowrap; letter-spacing: -0.06px; }
.layerlist { height: 86px; }
.layer { height: 23px; width: 363px; background: #f0f0f0; display: flex; align-items: center; padding-left: 29px; }
.check { width: 17px; height: 17px; border: 1px solid #b9b9b9; background: #fff; padding: 2px; }
.check svg { width: 11px; height: 11px; }
.swatch { width: 20px; height: 20px; margin: 0 8px; background: #beb297; border: 1px solid #3a3a3a; }
.layer strong { text-decoration: underline; text-underline-offset: 3px; letter-spacing: -0.4px; }
.vertex.title { height: 24px; padding-top: 4px; }
.menurow { height: 37px; padding-left: 334px; }
.menu { width: 30px; height: 29px; border: 1px solid #a9a9a9; border-radius: 3px; background: linear-gradient(#fdfdfd, #efefef); display: flex; flex-direction: column; align-items: center; justify-content: center; gap: 3px; }
.menu s { width: 14px; height: 2px; background: #555; }
.vertexbody { height: 63px; width: 364px; display: flex; justify-content: space-between; }
.vertexbody p { padding: 12px 0 0 11px; font-size: 12px; line-height: 16px; white-space: nowrap; }
.vertexbody .btn { height: 16px; }
.vertexbody .thumb { height: 36px; }

.proc { height: 44px; padding: 0 0 1px 14px; }
.proc .g svg { position: absolute; }
.proc .g .red { color: #cf2127; width: 12px; height: 12px; left: 0; top: 0; }
.proc .g .gray { color: #777; width: 9px; height: 9px; left: 11px; top: 5px; }
.proc .g .blue { color: #8caee0; width: 8px; height: 8px; left: 6px; top: 12px; }
.proc .py { margin-left: 23px; }
.proc .py svg { width: 17px; height: 17px; margin: 1px; }
.proc .ck { margin-left: 15px; }
.pressed { width: 30px; height: 29px; margin-left: 6px; border: 1px solid #a9a9a9; border-radius: 3px; background: #dcdcdc; padding: 4px; }
.pressed svg { width: 20px; height: 20px; }
.proc i { height: 24px !important; margin-left: 5px; }
.proc .nt, .proc .wr { margin-left: 8px; }
.proc .nt + i { margin-left: 10px; }
.search { width: 372px; height: 27px; border: 1px solid #a9a9a9; border-radius: 3px; background: #fff; display: flex; align-items: center; color: #777; font-size: 12.500px; padding-left: 9px; gap: 10px; margin-top: 3px; }
.search svg { width: 16px; height: 16px; color: #888; }
.search.plain { margin-top: 0; padding-left: 2px; font-size: 12px; }
.algs { height: 87px; margin: 0 0 0 1px; }
.algs .rows { height: 90px; padding-top: 2px; }
.algs .row { padding-left: 8px; letter-spacing: 0.05px; }
.algs .r { margin-right: 13px; }
.algs .row .i { width: 19px; height: 19px; margin-right: 8px; }
.algs .stub { height: 17px; border-top: 1px solid #b4b4b4; }
.algs .btn { height: 16px; }
.algs .btn.end { height: 18px; }
.res.title { height: 24px; padding-top: 2px; }
.blank { background: #fff; margin-left: 1px; }
.b1 { height: 239px; border-top: 1px solid #b4b4b4; }
.b2 { height: 85px; border-bottom: 1px solid #b4b4b4; border-top: 1px solid #b4b4b4; }
.b3 { height: 86px; border-bottom: 1px solid #b4b4b4; margin-top: 9px; }
.qms.title { height: 25px; padding-top: 2px; }
.filters { display: flex; justify-content: flex-end; gap: 8px; padding: 8px 0 0; height: 35px; width: 372px; font-size: 12px; }
.pushbtn { width: 100px; height: 26px; border: 1px solid #a9a9a9; border-radius: 3px; background: linear-gradient(#fefefe, #efefef); white-space: nowrap; }
.combo { width: 81px; height: 27px; border: 1px solid #a9a9a9; border-radius: 3px; background: linear-gradient(#fefefe, #ececec); display: flex; align-items: center; justify-content: space-between; padding: 0 9px 0 5px; }
.combo svg { width: 9px; height: 6px; }
.promo { height: 26px; width: 371px; margin-top: 5px; border: 1px solid #b4b4b4; border-left: 0; border-bottom: 0; display: flex; align-items: flex-start; padding: 14px 0 0 93px; font-size: 12px; line-height: 19px; gap: 9px; letter-spacing: -0.05px; }
.promo svg { width: 10px; height: 20px; }
.promo a { color: #00f; text-decoration: underline; }

.taskbar { height: 60px; flex: none; background: #1f2428; border-top: 1px solid #3c4245; display: flex; color: #fff; }
.weather { width: 546px; display: flex; padding: 13px 0 0 25px; gap: 10px; }
.weather svg { width: 30px; height: 28px; }
.weather div { display: flex; flex-direction: column; font-size: 14px; line-height: 20px; margin-top: -4px; }
.weather small { font-size: 14px; color: #c3c5c6; letter-spacing: 0.25px; }
.apps { width: 827px; display: flex; gap: 5px; padding-top: 4px; }
.app { width: 50px; height: 50px; display: flex; justify-content: center; padding-top: 11px; position: relative; border-radius: 5px; }
.app > svg { width: 29px; height: 29px; }
.app .teams { width: 35px; margin-left: 2px; }
.run::after { content: ""; position: absolute; left: 21px; bottom: 1px; width: 8px; height: 4px; border-radius: 2px; background: #9a9c9e; }
.active { background: #2c3135; border: 1px solid #363b3f; padding-top: 10px; }
.active::after { left: 14px; bottom: 0; width: 20px; background: #a2b0b6; }
.pill { width: 275px; height: 40px; margin: 5px -1px 0 2px; border-radius: 20px; background: #3f4348; border: 1px solid #54585c; display: flex; align-items: center; padding: 0 7px 0 14px; color: #fff; }
.pill svg { width: 19px; height: 19px; }
.pill span { flex: 1; padding-left: 12px; font-size: 16px; color: #d5d6d7; letter-spacing: 0.2px; }
.pill .bing { width: 26px; height: 26px; }
.tray { flex: 1; position: relative; display: flex; align-items: center; padding: 0 0 1px 283px; }
.chev { width: 14px; height: 9px; }
.net { width: 20px; height: 20px; margin-left: 23px; }
.vol { width: 20px; height: 18px; margin-left: 10px; }
.bat { width: 20px; height: 18px; margin-left: 10px; }
.time { width: 92px; display: flex; flex-direction: column; text-align: right; line-height: 20px; font-size: 14px; }
.badge { width: 20px; height: 20px; margin-left: 10px; border-radius: 50%; background: #9fadb3; color: #1f2428; font-size: 12px; line-height: 20px; text-align: center; }
```

FILE: map.js
```js
// Tree cover layer. Outlines are stored per survey sheet: origin x, origin y, x scale, y scale.
const sheets = { A: [500, 80, 3, 3], B: [760, 80, 3, 3], C: [460, 340, 2.904, 3], D: [980, 420, 3, 3], F: [0, 0, 1, 1] };

const mainland = 'F 650,193 660,187 680,183 693,176 713,180 730,178 747,172 767,168 770,177 780,175 790,168 798,170 793,180 795,197 783,200 787,213 793,203 803,200 810,203 810,187 820,183 823,170 813,162 827,162 832,157 843,153 857,143 867,147 870,140 883,132 887,127 903,119 907,128 917,123 918,112 927,112 930,108 937,108 938,100 939,108 947,142 957,187 964,227 968,248 971,262 980,303 987,340 993,375 987,375 982,365 963,357 953,365 960,350 955,335 937,327 920,317 903,313 890,308 860,312 857,305 832,298 828,310 813,317 802,332 793,337 797,322 790,328 780,343 773,350 758,352 753,361 742,373 722,382 723,407 725,420 722,433 730,437 736,423 735,440 715,455 721,460 701,455 694,455 689,447 670,452 663,435 670,423 670,410 656,403 651,393 667,386 663,377 657,360 652,348 630,328 615,343 593,357 558,377 557,370 580,357 597,340 600,320 610,310 601,300 608,270 613,272 615,290 633,295 645,270 655,265 648,257 638,255 637,237 617,240 630,253 610,262 597,253 570,280 567,272 583,257 577,243 593,243 605,237 590,227 590,215 603,207 610,223 633,232 637,203 640,198';

const islands = `
A 340,160 380,155 388,178 365,183 352,178
A 388,162 405,150 402,122 415,118 432,130 430,155 455,165 462,185 440,175 395,178
A 444,108 452,112 455,130 470,132 475,145 503,155 500,188 488,185 482,165 448,155
A 458,210 470,200 490,200 488,218 472,222
A 412,235 428,240 430,252 460,258 455,270 430,272 445,290 475,290 470,300 440,298 432,322 368,320 380,300 395,275 410,255
A 482,275 500,268 512,252 518,275 532,295 520,298 505,285 488,282
A 583,160 600,172 612,162 610,178 598,185 588,178
A 680,213 690,222 722,220 724,240 705,242 698,230 684,228
A 785,162 795,165 798,180 822,178 805,200 795,190 783,190
A 770,195 780,192 784,205 772,208
A 143,350 165,348 178,338 180,358 145,362
A 55,385 75,388 120,380 150,375 152,395 140,423 135,398 100,402 65,395
A 167,398 185,390 230,400 228,408 215,408 222,430 240,445 225,455 235,485 222,487 212,455 215,430 200,405
A 65,455 78,450 88,462 103,465 105,482 80,478
A 110,465 130,448 150,448 138,462 112,482
A 48,555 65,545 85,530 115,535 125,555 112,570 80,572 58,565
A 138,570 155,545 155,515 175,505 200,498 217,515 205,515 185,510 175,520 190,535 178,560 158,572
A 177,585 188,590 184,600
A 250,490 265,480 285,490 275,500
A 205,575 245,550 270,530 310,540 290,562 262,555 210,603 198,580
A 310,400 335,388 345,395 330,405
A 355,375 372,372 375,385 360,385
A 330,790 343,788 335,815 322,830 318,815
A 70,808 88,812 90,820 102,830 103,868 90,868 88,835 80,820
A 105,825 118,815 118,830 110,842
A 135,855 142,850 146,862 137,866
A 162,835 180,805 190,775 225,772 222,800 230,820 215,845 185,835
A 163,880 178,878 180,900 165,902
A 262,850 285,845 300,865 320,875 318,900 295,915 290,935 258,932 255,915 275,900 290,880 265,870
A 208,938 222,930 228,945 215,948
A 380,825 400,812 432,815 430,830 405,830 395,850 400,875 378,885 375,860 388,845
A 410,870 420,850 440,845 450,815 470,810 475,835 495,845 500,870 480,865 455,870 440,890 415,885
A 480,850 510,820 540,825 545,860 530,910 490,895
A 455,935 480,915 530,930 545,960 500,980 470,965
A 685,900 700,895 690,928
A 725,890 730,912 745,908 722,945 718,938
A 735,930 738,950 726,975 722,968
C 490,165 508,125 516,132 510,150 535,165 540,178 515,185 500,190 485,175
C 487,205 503,190 500,212
C 505,205 520,208 518,216
C 500,238 520,240 535,225 550,235 545,255 525,255 512,283 508,255
C 548,260 562,248 562,262
C 412,285 425,278 430,292 445,295 452,262 460,265 456,292 475,315 475,330 450,330 452,350 435,368 425,370 415,392 402,385 412,370 402,350 415,330
C 465,350 490,348 495,365 483,378 480,405 470,410 465,385 475,370
C 528,355 538,355 536,375 528,372
C 462,435 475,430 478,442 465,448
C 660,410 675,403 695,410 690,420 665,425
C 700,405 715,400 735,410 738,428 720,420
C 695,370 705,380 728,388 722,395 705,392
C 752,418 775,395 783,396 768,412
C 722,458 745,455 755,443 765,448 755,460 727,463
C 680,340 715,345 708,355 690,362
C 735,345 755,352 752,360 735,355
C 657,520 675,515 690,516 706,507 705,516 675,532
C 578,652 592,646 600,655 622,652 620,668 605,668 592,658
C 610,735 620,735 626,722 628,733 618,742
C 378,890 380,873 393,863 397,872 406,873 390,885
C 428,878 440,880 434,890
C 266,935 272,940 275,965 268,970
C 278,965 282,950 298,945 305,965 332,955 328,968 280,990 278,984 295,972
C 42,1033 52,1040 65,1035 52,1048
C 70,1028 80,1018 100,1018 108,1028 98,1036 75,1034
C 898,110 915,120 935,140 945,160 948,140 962,132 980,110 985,85 1005,70 1012,90 1022,85 1040,57 1035,72 1022,95 1040,100 1028,115 1020,140 1035,165 1040,205 1060,195 1122,177 1118,190 1080,205 1070,220 1045,230 1030,258 1000,255 990,240 960,275 925,305 920,330 898,345 886,388 884,350 893,322 908,305 898,268 925,275 950,260 945,240 928,235 950,225 925,190 905,165
C 950,335 975,320 1005,290 1015,298 1040,300 1030,345 1025,365 1008,382 985,365 968,345 955,345
C 955,358 963,360 955,400 952,415 938,420 940,405 950,395
C 1033,250 1055,240 1060,255 1045,283 1032,275
C 1055,113 1068,115 1065,130 1058,128
C 1070,235 1085,222 1100,218 1082,236
C 1145,340 1155,345 1155,362 1143,360
C 1293,330 1318,335 1326,345 1312,342
C 1354,328 1362,320 1368,330 1356,332
C 1367,358 1385,352 1380,340 1395,330 1402,345 1400,360 1380,362
C 1403,362 1430,365 1455,360 1465,340 1480,345 1475,357 1440,368 1415,378
C 1494,346 1515,348 1524,354 1500,354
C 1290,130 1310,150 1350,155 1370,180 1400,190 1465,188 1455,225 1415,210 1390,215 1365,195 1330,178 1310,185 1285,150
B 372,765 385,755 400,768 440,765 470,775 500,770 530,745 545,740 530,780 515,812 545,865 520,855 480,845 478,875 455,890 455,915 490,935 510,950 480,955 455,968 420,945 380,930 362,920 385,910 370,885 385,865 400,850 395,820 415,815 420,800 390,780
B 533,785 550,778 557,800 545,808 535,800
B 312,830 325,822 345,832 390,825 392,850 350,855 320,852
B 308,880 325,880 315,890
B 205,710 245,710 225,735 208,735
B 195,765 210,750 230,760 212,768
B 235,760 255,755 258,780 245,775
B 190,890 205,892 200,908
B 322,155 335,140 348,150 340,172 325,168
B 478,78 495,70 508,72 505,88 485,90
B 648,885 662,880 665,905 683,908 655,915
B 692,908 705,906 703,920
B 562,820 580,828 574,868 568,850
D 0,105 16,112 0,115
D 65,125 72,110 80,120 103,138 85,135
D 128,135 148,122 150,128 135,140
D 175,150 190,128 205,135 235,155 260,158 295,180 293,190 270,182 240,172 205,158 185,158
D 423,232 438,215 452,235 440,247
D 460,198 475,210 492,224 470,228
D 440,263 458,280 458,292 442,280
D 468,262 480,250 496,256 494,272 512,285 505,262 520,268 535,262 537,275 525,280 545,295 550,315 540,325 515,315 500,300 485,292 470,275
D 452,303 475,305 495,322 512,335 515,352 500,345 480,328 460,315
D 520,345 540,350 555,385 540,375
D 535,338 560,345 562,354 540,350
D 526,215 545,225 560,260 550,265 540,240
D 548,218 562,214 572,222 555,226
D 565,232 585,232 625,280 615,283 590,255
D 562,268 575,268 605,280 628,300 634,325 615,325 590,318 575,300 562,285
D 595,345 605,330 622,340 608,372 592,370
D 637,275 650,275 672,290 670,310 655,300
D 665,325 680,318 702,325 700,338 672,338
D 716,350 730,345 738,355 725,358
D 638,360 650,352 690,352 700,385 720,402 715,420 690,428 672,395 650,372
D 690,352 715,352 718,365 750,385 740,402 720,390 700,375
D 620,395 632,380 650,388 668,395 670,425 650,425 625,410
D 648,435 668,430 678,460 668,490 650,465
D 730,415 745,405 760,415 755,433 735,432
D 768,385 788,390 785,405 808,410 802,460 780,448 762,445 765,430 778,415
D 695,440 725,435 738,450 722,470 705,495 695,490 705,465
D 732,468 770,465 795,485 800,505 850,545 868,600 845,608 825,585 800,560 780,550 750,560 762,540 735,520 748,500
D 748,572 765,562 780,585 820,622 815,628 780,600
D 790,570 808,575 800,585
D 708,510 728,508 722,518
D 818,425 832,418 835,440 848,438 838,470 840,495 828,503 812,485 822,460
D 866,428 880,385 886,390 882,430
D 848,450 865,440 905,460 912,525 895,520 885,510 865,540 852,510 858,480
D 882,530 900,545 895,560 880,550
D 898,560 908,552 915,568
D 918,470 955,478 980,490 985,487 980,540 965,565 945,565 930,545 918,510
D 957,445 985,487 975,482`;

// Patches of fragmented cover: cx, cy, rx, ry, count, min size, max size
const patches = [
  [870, 230, 112, 90, 430, 2, 7], [930, 165, 30, 55, 70, 2, 6], [780, 230, 42, 56, 120, 2, 7],
  [795, 285, 44, 42, 90, 2, 7], [690, 215, 54, 40, 34, 2, 10], [700, 230, 20, 11, 50, 1, 4], [680, 250, 45, 38, 60, 2, 7],
  [655, 205, 30, 14, 26, 1.5, 5], [655, 290, 32, 14, 32, 1.5, 5], [622, 310, 20, 24, 18, 2, 6],
  [740, 308, 34, 26, 46, 1.5, 7], [880, 183, 28, 8, 110, 1, 4], [822, 212, 15, 6, 70, 1, 3.5],
  [850, 204, 22, 6, 60, 1, 3.5], [915, 175, 20, 10, 30, 1, 4], [955, 326, 18, 4, 40, 1, 3.5],
  [700, 366, 42, 26, 50, 2, 7], [672, 370, 18, 28, 30, 1.5, 5], [705, 422, 28, 36, 74, 1.5, 7],
  [890, 300, 60, 12, 60, 1.5, 5], [975, 350, 20, 18, 22, 1.5, 5], [900, 240, 60, 14, 50, 1.5, 6],
  [805, 420, 20, 30, 12, 1, 4], [803, 448, 9, 10, 18, 1, 3], [960, 200, 14, 60, 60, 1.5, 5],
  [1275, 582, 14, 20, 26, 1, 3.5], [1300, 592, 13, 18, 36, 1, 3.5], [1258, 608, 20, 16, 26, 1, 3]
];
// Continuous cover, kept free of fragments: cx, cy, rx, ry
const plains = [[955, 285, 26, 28], [866, 239, 24, 8], [841, 187, 17, 7], [890, 268, 20, 9], [885, 143, 14, 8], [730, 188, 26, 9], [700, 318, 42, 24], [782, 233, 12, 6], [655, 233, 12, 17], [742, 232, 12, 7], [768, 340, 20, 10], [670, 435, 7, 14], [695, 385, 9, 14], [932, 122, 8, 10], [663, 322, 24, 16]];
const specks = [[870, 230, 110, 110, 420], [730, 290, 100, 60, 300], [720, 220, 80, 50, 240], [700, 410, 50, 50, 110], [900, 360, 40, 36, 130], [940, 290, 40, 35, 60], [805, 410, 24, 40, 50], [610, 240, 30, 30, 30], [675, 230, 34, 40, 60]];
const rivers = [
  'B 232,385 250,378 265,368 285,352 310,338 335,328 370,325 400,305 425,285 470,258 470,264 430,292 402,308 378,330 340,334 312,343 288,358 268,374 250,387',
  'B 365,335 375,335 398,360 430,388 455,402 450,408 425,393 392,362', 'B 430,430 448,435 472,465 465,467 445,445',
  'B 555,460 590,468 607,490 603,498 582,478 555,464', 'B 110,560 140,580 138,590 120,578', 'B 115,460 135,455 128,475 118,490',
  'A 530,600 600,593 650,577 740,542 742,545 655,580 605,596 532,604', 'A 740,532 790,541 840,536 840,541 790,546',
  'A 635,752 665,740 680,748 660,762 638,762', 'A 595,755 603,765 597,778 588,770', 'A 495,500 515,495 512,550 498,545', 'A 385,735 400,705 402,712 388,752',
  'A 440,640 465,590 468,596 448,640', 'B 85,750 125,690 128,697 95,760', 'B 40,545 60,570 55,578 45,560'
];

let seed = 20231107;
const rnd = () => { seed = (seed * 1664525 + 1013904223) >>> 0; return seed / 4294967296; };

function parse(line) {
  const parts = line.trim().split(/\s+/), [ox, oy, sx, sy] = sheets[parts[0]];
  return parts.slice(1).map(p => { const [x, y] = p.split(',').map(Number); return [ox + x / sx, oy + y / sy]; });
}
function roughen(pts, amount, minLen) {
  for (let level = 0; level < 4; level++) {
    const out = [];
    pts.forEach((p, i) => {
      const q = pts[(i + 1) % pts.length], dx = q[0] - p[0], dy = q[1] - p[1], len = Math.hypot(dx, dy);
      out.push(p);
      const border = p[0] > 937 && q[0] > 937 && dy > 0 && p[1] < 376 && q[1] < 376 && pts.length > 80 && dx < dy / 2;
      if (len > minLen && !border) {
        const k = (rnd() - .5) * 2 * amount;
        out.push([p[0] + dx / 2 - dy * k, p[1] + dy / 2 + dx * k]);
      }
    });
    pts = out;
  }
  return pts;
}
const path = pts => 'M' + pts.map(p => p[0].toFixed(1) + ' ' + p[1].toFixed(1)).join('L') + 'Z';
const inPlain = (x, y) => plains.some(([cx, cy, rx, ry]) => ((x - cx) / rx) ** 2 + ((y - cy) / ry) ** 2 < 1);

function spot(cx, cy, rx, ry) {
  const a = rnd() * 6.283, r = Math.sqrt(rnd());
  return [cx + Math.cos(a) * r * rx, cy + Math.sin(a) * r * ry];
}
function fragment(x, y, size) {
  const n = 5 + Math.floor(rnd() * 6), tilt = rnd() * 1.4 - .9, stretch = 1 + rnd() * .6, pts = [];
  for (let i = 0; i < n; i++) {
    const a = i / n * 6.283, r = size * (.35 + rnd() * .85);
    const u = Math.cos(a) * r * stretch, v = Math.sin(a) * r / stretch;
    pts.push([x + u * Math.cos(tilt) - v * Math.sin(tilt), y + u * Math.sin(tilt) + v * Math.cos(tilt)]);
  }
  return path(roughen(pts, .36, 2.4));
}

let outlines = '', gaps = '', dots = '';
const coast = path(roughen(parse(mainland), .34, 2.2));
const isles = islands.trim().split('\n').map(line => {
  const base = parse(line), xs = base.map(p => p[0]), ys = base.map(p => p[1]);
  const x0 = Math.min(...xs), y0 = Math.min(...ys), w = Math.max(...xs) - x0, h = Math.max(...ys) - y0;
  const count = Math.round(w * h / (x0 > 1225 ? 40 : 80));
  for (let i = 0; i < count; i++) {
    outlines += fragment(x0 + rnd() * w, y0 + rnd() * h, 1 + rnd() * 2.5);
    dots += `M${(x0 + rnd() * w).toFixed(1)} ${(y0 + rnd() * h).toFixed(1)}h1.5`;
  }
  return path(roughen(base, .28, 2.2));
}).join('');
for (const [cx, cy, rx, ry, count, lo, hi] of patches) {
  for (let i = 0; i < count; i++) {
    const [x, y] = spot(cx, cy, rx, ry);
    if (inPlain(x, y)) continue;
    const d = fragment(x, y, lo + rnd() * rnd() * (hi - lo) * 1.2);
    if (rnd() < .03 && hi < 8) gaps += d; else outlines += d;
  }
}
for (const [cx, cy, rx, ry, count] of specks) {
  for (let i = 0; i < count; i++) {
    const [x, y] = spot(cx, cy, rx, ry);
    if (inPlain(x, y) && rnd() < .75) continue;
    dots += `M${x.toFixed(1)} ${y.toFixed(1)}h${(1.2 + rnd() * 1.3).toFixed(1)}`;
  }
}
const water = rivers.map(r => path(roughen(parse(r), .15, 3))).join('');
document.getElementById('map').innerHTML = `
  <clipPath id="land"><path d="${coast}"/><path d="${isles}"/></clipPath>
  <g class="cover" stroke="#232323" stroke-width="1.2" stroke-linejoin="round">
    <path d="${isles}" fill="#beb297"/><path d="${coast}" fill="#beb297"/>
    <g clip-path="url(#land)">
      <path d="${outlines}" fill="none" stroke-width="1.05"/>
      <path d="${gaps}${water}" fill="#fff" stroke-width=".9"/>
      <path d="${dots}" fill="none" stroke-width="1.9"/>
      <path d="M801 205L805 325" fill="none"/>
    </g>
    <path d="${isles}${coast}" fill="none"/>
  </g>`;
```
